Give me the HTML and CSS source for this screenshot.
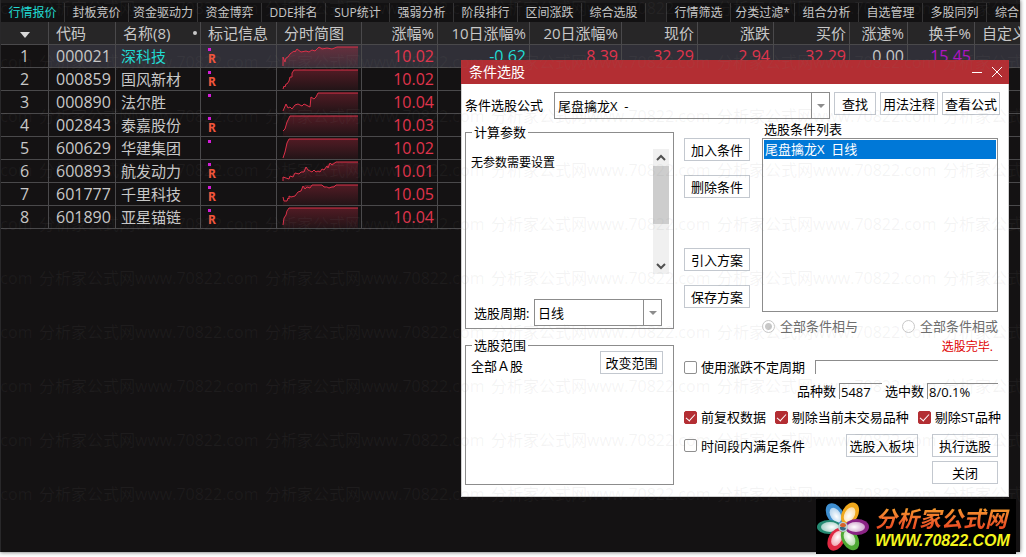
FILE: index.html
```html
<!DOCTYPE html>
<html lang="zh-CN">
<head>
  <meta charset="UTF-8">
  <meta name="viewport" content="width=device-width, initial-scale=1.0">
  <title>行情报价</title>
  <link rel="stylesheet" href="styles.css">
</head>
<body>
  <div class="app">
    <nav class="tabs">
      <button class="tab active">行情报价</button>
      <button class="tab">封板竞价</button>
      <button class="tab">资金驱动力</button>
      <button class="tab">资金博弈</button>
      <button class="tab">DDE排名</button>
      <button class="tab">SUP统计</button>
      <button class="tab">强弱分析</button>
      <button class="tab">阶段排行</button>
      <button class="tab">区间涨跌</button>
      <button class="tab">综合选股</button>
      <span class="tab-space"></span>
      <button class="tab">行情筛选</button>
      <button class="tab">分类过滤*</button>
      <button class="tab">组合分析</button>
      <button class="tab">自选管理</button>
      <button class="tab">多股同列</button>
      <button class="tab tab-cut">综合</button>
    </nav>

    <table class="quotes">
      <colgroup>
        <col class="c-index"><col class="c-code"><col class="c-name"><col class="c-mark"><col class="c-chart">
        <col class="c-num"><col class="c-wide"><col class="c-wide"><col class="c-num"><col class="c-num"><col class="c-num">
        <col class="c-speed"><col class="c-turn"><col>
      </colgroup>
      <thead>
        <tr>
          <th class="center"><svg width="10" height="6" viewBox="0 0 10 6"><path d="M0 0h10L5 6z" fill="#d8d8d8"/></svg></th>
          <th>代码</th>
          <th><span class="name-head">名称(8)<i class="dot"></i></span></th>
          <th>标记信息</th>
          <th>分时简图</th>
          <th class="num">涨幅%</th>
          <th class="num">10日涨幅%</th>
          <th class="num">20日涨幅%</th>
          <th class="num">现价</th>
          <th class="num">涨跌</th>
          <th class="num">买价</th>
          <th class="num">涨速%</th>
          <th class="num">换手%</th>
          <th>自定义</th>
        </tr>
      </thead>
      <tbody>
        <tr class="selected">
          <td class="center">1</td><td>000021</td><td class="name">深科技</td>
          <td><span class="mark"><i></i>R</span></td>
          <td class="chart">
            <svg viewBox="0 0 84 22">
              <defs>
                <linearGradient id="fill" x2="0" y2="1">
                  <stop offset="0" stop-color="#e0304c" stop-opacity="0.3"/>
                  <stop offset="1" stop-color="#e0304c" stop-opacity="0.07"/>
                </linearGradient>
              </defs>
              <path class="area" d="M6 21V12L8 17L9 13L13 9L17 6L20 4L24 7L29 6L32 7L38 5L42 2L50 3L55 4L60 2H81V22H6z"/><path class="line" d="M6 21V12L8 17L9 13L11 12L13 9L17 6L18 7L20 4L24 7L29 6L32 7L35 5L38 6L42 2L45 4L50 3L55 4L60 2H81"/>
            </svg>
          </td>
          <td class="num up">10.02</td><td class="num down">-0.62</td><td class="num up">8.39</td><td class="num up">32.29</td><td class="num up">2.94</td><td class="num up">32.29</td><td class="num">0.00</td><td class="num turnover">15.45</td><td></td>
        </tr>
        <tr>
          <td class="center">2</td><td>000859</td><td class="name">国风新材</td>
          <td><span class="mark"><i></i>R</span></td>
          <td class="chart"><svg viewBox="0 0 84 22"><path class="area" d="M6 21L8 17H10L12 13L13 9H15V5L17 2H81V22H6z"/><path class="line" d="M6 21L7 18L8 19L9 16H10L12 13L13 9H15V5L17 2H81"/></svg></td>
          <td class="num up">10.02</td><td></td><td></td><td></td><td></td><td></td><td></td><td></td><td></td>
        </tr>
        <tr>
          <td class="center">3</td><td>000890</td><td class="name">法尔胜</td>
          <td><span class="mark"><i></i></span></td>
          <td class="chart"><svg viewBox="0 0 84 22"><path class="area" d="M6 20L9 13L11 17L15 18L18 14L21 13L25 15L29 13L33 16L34 6L37 8L39 6L41 2H81V22H6z"/><path class="line" d="M6 20L9 13L11 17L13 16L15 18L18 14L21 13L25 15L27 13L29 14L33 16L34 6L37 8L39 6L41 2H81"/></svg></td>
          <td class="num up">10.04</td><td></td><td></td><td></td><td></td><td></td><td></td><td></td><td></td>
        </tr>
        <tr>
          <td class="center">4</td><td>002843</td><td class="name">泰嘉股份</td>
          <td><span class="mark"><i></i>R</span></td>
          <td class="chart"><svg viewBox="0 0 84 22"><path class="area" d="M6 17L8 15L10 8L13 2H81V22H6z"/><path class="line" d="M6 17L8 15L10 8L13 2H81"/></svg></td>
          <td class="num up">10.03</td><td></td><td></td><td></td><td></td><td></td><td></td><td></td><td></td>
        </tr>
        <tr>
          <td class="center">5</td><td>600629</td><td class="name">华建集团</td>
          <td><span class="mark"><i></i></span></td>
          <td class="chart"><svg viewBox="0 0 84 22"><path class="area" d="M6 21L8 15L10 6L12 2H81V22H6z"/><path class="line" d="M6 21L8 15L10 6L12 2H81"/></svg></td>
          <td class="num up">10.02</td><td></td><td></td><td></td><td></td><td></td><td></td><td></td><td></td>
        </tr>
        <tr>
          <td class="center">6</td><td>600893</td><td class="name">航发动力</td>
          <td><span class="mark"><i></i>R</span></td>
          <td class="chart"><svg viewBox="0 0 84 22"><path class="area" d="M6 21V17L12 19L16 14L24 12L29 7L33 12L40 11L46 10L51 4L59 2H81V22H6z"/><path class="line" d="M6 21V17L9 18L12 19L13 16L16 17L18 13L22 14L24 12L27 12L29 7L31 10L35 12L37 10L39 12L41 11L43 12L45 9L47 10L50 6L51 8L53 3L55 5L59 2H81"/></svg></td>
          <td class="num up">10.01</td><td></td><td></td><td></td><td></td><td></td><td></td><td></td><td></td>
        </tr>
        <tr>
          <td class="center">7</td><td>601777</td><td class="name">千里科技</td>
          <td><span class="mark"><i></i>R</span></td>
          <td class="chart"><svg viewBox="0 0 84 22"><path class="area" d="M6 14L7 18L11 17L12 13L18 13L24 7L28 2H46L50 5L58 2H81V22H6z"/><path class="line" d="M6 14L7 18H10L11 15L12 16V13L14 14L18 13L21 9L24 8L26 3L28 6L30 4L33 5L35 2H45L47 4H50L52 5L55 4H57L59 2H81"/></svg></td>
          <td class="num up">10.05</td><td></td><td></td><td></td><td></td><td></td><td></td><td></td><td></td>
        </tr>
        <tr>
          <td class="center">8</td><td>601890</td><td class="name">亚星锚链</td>
          <td><span class="mark"><i></i>R</span></td>
          <td class="chart"><svg viewBox="0 0 84 22"><path class="area" d="M6 19L7 12L9 9L12 2H81V22H6z"/><path class="line" d="M6 19L7 12L9 9L10 5L12 2H81"/></svg></td>
          <td class="num up">10.04</td><td></td><td></td><td></td><td></td><td></td><td></td><td></td><td></td>
        </tr>
      </tbody>
    </table>

    <section class="dialog" role="dialog" aria-labelledby="dialog-title">
      <header class="dialog-head">
        <h1 id="dialog-title">条件选股</h1>
        <button class="win-btn" aria-label="最小化"><svg width="12" height="12" viewBox="0 0 12 12"><path d="M1 6.5h10" stroke="#fff"/></svg></button>
        <button class="win-btn" aria-label="关闭窗口"><svg width="12" height="12" viewBox="0 0 12 12"><path d="M1 1l10 10M11 1L1 11" stroke="#fff"/></svg></button>
      </header>

      <div class="formula-row">
        <label for="formula">条件选股公式</label>
        <span class="combo formula-combo">
          <select id="formula"><option>尾盘擒龙X&nbsp; -</option></select>
          <svg class="arrow" width="8" height="4" viewBox="0 0 8 4"><path d="M0 0h8L4 4z"/></svg>
        </span>
        <button class="btn btn-find">查找</button>
        <button class="btn btn-help">用法注释</button>
        <button class="btn btn-help">查看公式</button>
      </div>

      <div class="dialog-body">
        <div class="left">
          <fieldset class="params">
            <legend>计算参数</legend>
            <div class="param-area">
              <p>无参数需要设置</p>
              <div class="scroll">
                <svg width="16" height="17" viewBox="0 0 16 17"><path d="M4 11l4-4 4 4" fill="none" stroke="#505050" stroke-width="2"/></svg>
                <div class="thumb"></div>
                <svg width="16" height="17" viewBox="0 0 16 17"><path d="M4 7l4 4 4-4" fill="none" stroke="#505050" stroke-width="2"/></svg>
              </div>
            </div>
            <div class="period">
              <label for="period">选股周期:</label>
              <span class="combo period-combo">
                <select id="period"><option>日线</option></select>
                <svg class="arrow" width="8" height="4" viewBox="0 0 8 4"><path d="M0 0h8L4 4z"/></svg>
              </span>
            </div>
          </fieldset>
          <fieldset class="range">
            <legend>选股范围</legend>
            <div class="range-row">
              <span>全部Ａ股</span>
              <button class="btn btn-range">改变范围</button>
            </div>
          </fieldset>
        </div>

        <div class="right">
          <div class="conditions">
            <div class="actions">
              <button class="btn">加入条件</button>
              <button class="btn">删除条件</button>
              <button class="btn second-group">引入方案</button>
              <button class="btn">保存方案</button>
            </div>
            <div class="list-col">
              <span id="list-label" class="list-label">选股条件列表</span>
              <ul class="listbox" role="listbox" aria-labelledby="list-label">
                <li role="option" aria-selected="true">尾盘擒龙X&nbsp; 日线</li>
              </ul>
              <div class="radios">
                <label><input type="radio" name="logic" checked disabled>全部条件相与</label>
                <label><input type="radio" name="logic" disabled>全部条件相或</label>
              </div>
              <p class="status">选股完毕.</p>
            </div>
          </div>

          <div class="row">
            <label><input type="checkbox">使用涨跌不定周期</label>
            <input type="text" class="sunken grow" aria-label="不定周期">
          </div>
          <div class="row counts">
            <label for="total">品种数</label>
            <input type="text" id="total" class="sunken total" value="5487">
            <label for="hits">选中数</label>
            <input type="text" id="hits" class="sunken hits" value="8/0.1%">
          </div>
          <div class="row checks">
            <label><input type="checkbox" checked>前复权数据</label>
            <label><input type="checkbox" checked>剔除当前未交易品种</label>
            <label><input type="checkbox" checked>剔除ST品种</label>
          </div>
          <div class="row run">
            <label><input type="checkbox">时间段内满足条件</label>
            <button class="btn btn-block">选股入板块</button>
            <button class="btn">执行选股</button>
          </div>
          <div class="row close">
            <button class="btn">关闭</button>
          </div>
        </div>
      </div>
    </section>

    <div class="watermark" aria-hidden="true"></div>
  </div>

  <div class="logo">
    <svg width="54" height="52" viewBox="0 0 54 52">
      <defs>
        <radialGradient id="shine" cx="0.4" r="0.6">
          <stop offset="0" stop-color="#fff"/>
          <stop offset="1" stop-color="#fff" stop-opacity="0.6"/>
        </radialGradient>
      </defs>
      <g transform="translate(27 26)">
        <g transform="rotate(-122)"><ellipse cx="15" rx="12" ry="8" fill="#3f8fd0"/><ellipse cx="14" rx="8" ry="5" fill="url(#shine)"/></g>
        <g transform="rotate(-62)"><ellipse cx="15" rx="12" ry="8" fill="#f0a81c"/><ellipse cx="14" rx="8" ry="5" fill="url(#shine)"/></g>
        <g transform="rotate(180)"><ellipse cx="14" rx="12" ry="7" fill="#258a72"/><ellipse cx="13" rx="9" ry="5" fill="url(#shine)"/></g>
        <g transform="rotate(118)"><ellipse cx="14" rx="12" ry="8" fill="#df2942"/><ellipse cx="13" rx="8" ry="5" fill="url(#shine)"/></g>
        <g transform="rotate(60)"><ellipse cx="14" rx="12" ry="8" fill="#4fa934"/><ellipse cx="13" rx="8" ry="5" fill="url(#shine)"/></g>
        <ellipse cx="14" rx="12" ry="8" fill="#8a2384"/><ellipse cx="13" rx="9" ry="5" fill="url(#shine)"/>
        <circle r="5" fill="#b9cfd0"/>
        <path d="M-3 -1A3 3 0 0 1 3 -1L0 1z" fill="#d5622c"/>
        <path d="M-3 0A3 3 0 0 0 3 1L0 0z" fill="#376a84"/>
      </g>
    </svg>
    <div class="logo-text">
      <strong>分析家公式网</strong>
      <span>WWW.70822.COM</span>
    </div>
  </div>

  <script>
    // Tile the site name over the whole window
    const watermark = document.querySelector('.watermark');
    for (let i = 0; i < 60; i++) {
      const item = document.createElement('span');
      item.textContent = '分析家公式网www.70822.com';
      watermark.appendChild(item);
    }
  </script>
</body>
</html>
```

FILE: styles.css
```css
:root {
  --bg: #141213;
  --line: #4a494b;
  --text: #c8c8c8;
  --up: #e0344c;
  --down: #20dcd4;
  --red: #b32e33;
  --border: #8c8c8c;
  --btn-border: #c3c8cf;
}
* { box-sizing: border-box; margin: 0; padding: 0; }
body {
  font-family: "Open Sans", "Noto Sans CJK SC", sans-serif;
  background-color: #fff;
  height: 100vh;
  padding: 0 6px 5px 0;
  overflow: hidden;
}
button, input, select { font: inherit; color: inherit; }
.app {
  position: relative;
  height: 100%;
  overflow: hidden;
  background-color: var(--bg);
  border-left: 1px solid #29282a;
  box-shadow: 0 0 4px #555;
}

/* Tabs */
.tabs {
  display: flex;
  height: 22px;
  padding-top: 3px;
  overflow: hidden;
  background-color: #1c1b1c;
}
.tab {
  flex: none;
  min-width: 64px;
  padding: 0 4px;
  border: none;
  border-right: 1px solid #343334;
  background-color: #121112;
  color: var(--text);
  font-size: 12px;
  line-height: 18px;
  white-space: nowrap;
}
.tab.active { color: var(--down); }
.tab-cut { padding-left: 8px; text-align: left; }
.tab-space {
  flex: none;
  width: 21px;
  border-right: 1px solid #343334;
}

/* Quotes */
.quotes {
  width: 100%;
  table-layout: fixed;
  border-collapse: separate;
  border-spacing: 0;
  color: var(--text);
}
.c-index { width: 48px; }
.c-code { width: 67px; }
.c-name { width: 85px; }
.c-mark { width: 76px; }
.c-chart { width: 85px; }
.c-num { width: 76px; }
.c-wide { width: 92px; }
.c-speed { width: 58px; }
.c-turn { width: 67px; }
.quotes th, .quotes td {
  height: 23px;
  padding: 0 3px 0 7px;
  border-right: 1px solid var(--line);
  border-bottom: 1px solid var(--line);
  font-size: 16px;
  line-height: 22px;
  text-align: left;
  white-space: nowrap;
  overflow: hidden;
}
.quotes th {
  background-color: #272627;
  font-size: 15px;
  font-weight: normal;
}
.quotes th:last-child, .quotes td:last-child { border-right: none; }
.quotes .name { padding-left: 5px; font-size: 15px; }
.quotes .center { padding: 0; text-align: center; }
.quotes .num { padding-left: 0; text-align: right; }
.quotes th svg { vertical-align: middle; }
.selected td { background-color: #302f37; }
.selected td:first-child { background-color: var(--bg); }
.selected .name { color: var(--down); }
.quotes .up { color: var(--up); }
.quotes .down { color: var(--down); }
.quotes .turnover { color: #b014c4; }
.name-head {
  display: flex;
  justify-content: space-between;
  align-items: center;
}
.dot {
  width: 4px;
  height: 4px;
  border-radius: 50%;
  background-color: var(--text);
}
.mark {
  display: flex;
  flex-direction: column;
  height: 18px;
  gap: 2px;
  padding-top: 1px;
  color: #f0563c;
  font: bold 12px/12px "Noto Sans", sans-serif;
}
.mark i {
  flex: none;
  width: 3px;
  height: 3px;
  background-color: #d41cd8;
}
.quotes .chart { padding: 0; }
.chart svg { display: block; width: 84px; height: 22px; }
.area { fill: url(#fill); }
.line { fill: none; stroke: #dc3048; stroke-width: 1; }

/* Dialog */
.dialog {
  position: absolute;
  top: 60px;
  right: 11px;
  width: 548px;
  border: 1px solid #d0d0d0;
  border-top: none;
  background-color: #fff;
  color: #000;
  font-size: 13px;
  line-height: 16px;
}
.dialog-head {
  display: flex;
  align-items: center;
  gap: 8px;
  height: 24px;
  margin: 0 -1px;
  padding: 0 6px 0 8px;
  background-color: var(--red);
  color: #fff;
}
.dialog-head h1 {
  flex: 1;
  font-size: 14px;
  font-weight: normal;
}
.win-btn {
  display: flex;
  border: none;
  background: none;
}
.btn {
  width: 66px;
  height: 23px;
  border: 1px solid var(--btn-border);
  background-color: #fff;
  line-height: 16px;
  white-space: nowrap;
}
.combo {
  position: relative;
  display: block;
  height: 27px;
}
.combo select {
  width: 100%;
  height: 100%;
  padding: 0 3px;
  border: 1px solid var(--border);
  border-radius: 0;
  background: linear-gradient(var(--border), var(--border)) right 17px top / 1px 100% no-repeat #fff;
  appearance: none;
}
/* drop-down arrow over the right end of the select */
.arrow {
  position: absolute;
  top: 12px;
  right: 5px;
  fill: var(--border);
  pointer-events: none;
}
.formula-row {
  display: flex;
  align-items: flex-start;
  gap: 4px;
  padding: 8px 8px 0 3px;
}
.formula-row label { width: 85px; line-height: 27px; }
.formula-combo { flex: 1; }
.btn-find { width: 42px; }
.btn-help { width: 58px; }
.dialog-body {
  display: flex;
  gap: 10px;
  padding: 0 7px 11px 3px;
}
.left { flex: none; width: 209px; }
fieldset {
  border: 1px solid var(--border);
  min-width: 0;
}
legend {
  margin-left: 6px;
  padding: 0 2px;
  line-height: 15px;
}
.params { height: 204px; margin-top: 6px; }
.param-area {
  display: flex;
  justify-content: space-between;
  padding: 9px 4px 0 5px;
  font-size: 12px;
}
.param-area p { padding-top: 6px; }
.scroll {
  display: flex;
  flex-direction: column;
  width: 16px;
  height: 125px;
  background-color: #f0f0f0;
}
.scroll svg { flex: none; }
.thumb {
  flex: none;
  height: 58px;
  margin-bottom: auto;
  background-color: #cdcdcd;
}
.period {
  display: flex;
  align-items: center;
  justify-content: space-between;
  padding: 25px 11px 0 8px;
}
.period-combo { width: 128px; }
.range { height: 147px; margin-top: 9px; }
.range-row {
  display: flex;
  justify-content: space-between;
  padding-left: 5px;
  padding-right: 10px;
  line-height: 26px;
}
.range-row .btn-range { width: 63px; margin-top: -2px; }
.right { flex: 1; min-width: 0; }
.conditions { display: flex; gap: 12px; padding-right: 3px; }
.actions {
  display: flex;
  flex-direction: column;
  gap: 14px;
  padding-top: 19px;
}
.actions .second-group { margin-top: 36px; }
.list-col { flex: 1; }
.list-label { display: block; height: 19px; padding: 2px 2px 0; }
.listbox {
  height: 174px;
  padding: 1px;
  border: 1px solid var(--border);
  list-style: none;
}
.listbox li {
  background-color: #0078d7;
  color: #fff;
  padding-left: 1px;
  line-height: 19px;
}
.radios {
  display: flex;
  justify-content: space-between;
  height: 20px;
  margin-top: 4px;
  color: #6d6d6d;
}
.radios label, .row label { display: flex; align-items: center; }
.radios input {
  width: 13px;
  height: 13px;
  margin-right: 5px;
  border: 1px solid #c8c8c8;
  border-radius: 50%;
  appearance: none;
}
.radios input:checked { background: radial-gradient(#c8c8c8 3px, #fff 4px); }
.status {
  height: 21px;
  padding-right: 5px;
  color: #e00000;
  font-size: 12px;
  line-height: 21px;
  text-align: right;
}
.row {
  display: flex;
  align-items: center;
  height: 20px;
  padding-right: 3px;
}
.row input[type="checkbox"] {
  width: 13px;
  height: 13px;
  margin-right: 4px;
  border: 1px solid #8f8f8f;
  border-radius: 2px;
  background-color: #fff;
  appearance: none;
}
.row input[type="checkbox"]:checked {
  display: grid;
  place-items: center;
  border-color: var(--red);
  background-color: var(--red);
}
.row input[type="checkbox"]:checked::after {
  content: "";
  width: 4px;
  height: 8px;
  margin-bottom: 2px;
  border: solid #fff;
  border-width: 0 1px 1px 0;
  transform: rotate(42deg);
}
.sunken {
  height: 14px;
  border: solid var(--border);
  border-width: 1px 0 0 1px;
  background: none;
  padding-left: 1px;
}
.grow { flex: 1; min-width: 0; margin-left: 10px; }
.counts { justify-content: flex-end; gap: 3px; margin-top: 4px; }
.counts .sunken { height: 16px; }
.total { width: 43px; }
.hits { width: 71px; }
.checks { justify-content: space-between; margin-top: 6px; padding-right: 0; white-space: nowrap; }
.run { height: 23px; margin-top: 7px; gap: 14px; }
.run label { flex: 1; }
.btn-block { width: 72px; }
.close { height: 23px; margin-top: 4px; justify-content: flex-end; }

/* Watermark and logo lie over the window */
.watermark {
  position: absolute;
  top: -19px;
  left: -188px;
  display: grid;
  grid-template-columns: repeat(6, 226px);
  color: rgba(128, 128, 128, 0.09);
  font-size: 16px;
  line-height: 54px;
  white-space: nowrap;
  pointer-events: none;
}
.logo {
  position: absolute;
  right: 10px;
  bottom: 3px;
  display: flex;
  align-items: center;
  gap: 5px;
  width: 200px;
  height: 55px;
  background-color: #000;
  white-space: nowrap;
}
.logo-text { display: flex; flex-direction: column; }
.logo strong {
  background: linear-gradient(#f6b02c, #f0682c 60%, #e8401c);
  background-clip: text;
  color: transparent;
  font: italic bold 22px/28px "Noto Sans CJK SC", sans-serif;
}
.logo span {
  color: #f4f41c;
  font: italic bold 16px/20px "Liberation Sans", sans-serif;
}
```
